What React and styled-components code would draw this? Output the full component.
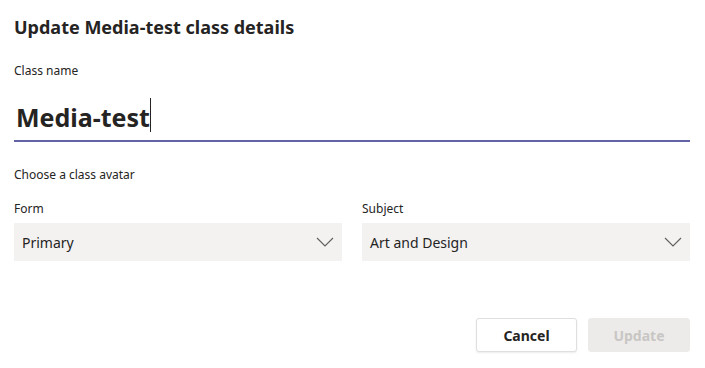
import React from "react";
import styled, { createGlobalStyle } from "styled-components";

const GlobalStyle = createGlobalStyle`
  html, body {
    margin: 0;
    padding: 0;
    background: #fff;
  }
  body {
    font-family: "Segoe UI", "Noto Sans", "Open Sans", sans-serif;
    color: #252423;
  }
`;

const ChevronDown = () => (
  <svg width="18" height="10" viewBox="0 0 18 10" fill="none">
    <path d="M1 1l8 8 8-8" stroke="#605e5c" strokeWidth="1.1" />
  </svg>
);

export default function App() {
  return (
    <>
      <GlobalStyle />
      <Dialog>
        <Title>Update Media-test class details</Title>
        <NameLabel>Class name</NameLabel>
        <NameField>
          <NameText>Media-test</NameText>
          <Caret />
        </NameField>
        <Hint>Choose a class avatar</Hint>
        <Row>
          <Field>
            <Label>Form</Label>
            <Select>
              <span>Primary</span>
              <ChevronDown />
            </Select>
          </Field>
          <Field>
            <Label>Subject</Label>
            <Select>
              <span>Art and Design</span>
              <ChevronDown />
            </Select>
          </Field>
        </Row>
        <Footer>
          <Button>Cancel</Button>
          <Button primary disabled>
            Update
          </Button>
        </Footer>
      </Dialog>
    </>
  );
}

const Dialog = styled.div`
  width: 705px;
  height: 368px;
  box-sizing: border-box;
  padding: 14px 15px 0 14px;
  display: flex;
  flex-direction: column;
`;

const Title = styled.h1`
  margin: 0;
  font-size: 18px;
  line-height: 26px;
  font-weight: 700;
  color: #252423;
`;

const Label = styled.div`
  font-size: 12px;
  line-height: 16px;
  color: #252423;
`;

const NameLabel = styled(Label)`
  margin-top: 23px;
`;

const NameField = styled.div`
  margin-top: 14px;
  height: 47px;
  border-bottom: 2px solid #6264a7;
  display: flex;
  align-items: center;
  padding-left: 2px;
  margin-bottom: 25px;
`;

const NameText = styled.span`
  font-size: 25px;
  font-weight: 700;
  color: #252423;
`;

const Caret = styled.span`
  width: 1px;
  height: 34px;
  margin-top: -4px;
  background: #252423;
`;

const Hint = styled(Label)`
  margin-bottom: 18px;
`;

const Row = styled.div`
  display: flex;
  gap: 20px;
`;

const Field = styled.div`
  flex: 1;
  display: flex;
  flex-direction: column;
  gap: 6px;
`;

const Select = styled.div`
  height: 38px;
  background: #f3f2f1;
  display: flex;
  align-items: center;
  justify-content: space-between;
  padding: 0 8px 0 8px;
  font-size: 14px;
  color: #252423;
`;

const Footer = styled.div`
  margin-top: 57px;
  display: flex;
  justify-content: flex-end;
  gap: 11px;
`;

const Button = styled.button`
  width: ${(p) => (p.primary ? "102px" : "101px")};
  height: 34px;
  box-sizing: border-box;
  border-radius: 3px;
  font-family: inherit;
  font-size: 14px;
  font-weight: 700;
  border: 1px solid ${(p) => (p.primary ? "#edebe9" : "#e1dfdd")};
  background: ${(p) => (p.primary ? "#edebe9" : "#fff")};
  color: ${(p) => (p.primary ? "#c8c6c4" : "#252423")};
  box-shadow: ${(p) => (p.primary ? "none" : "0 1px 2px rgba(0,0,0,0.08)")};
`;
